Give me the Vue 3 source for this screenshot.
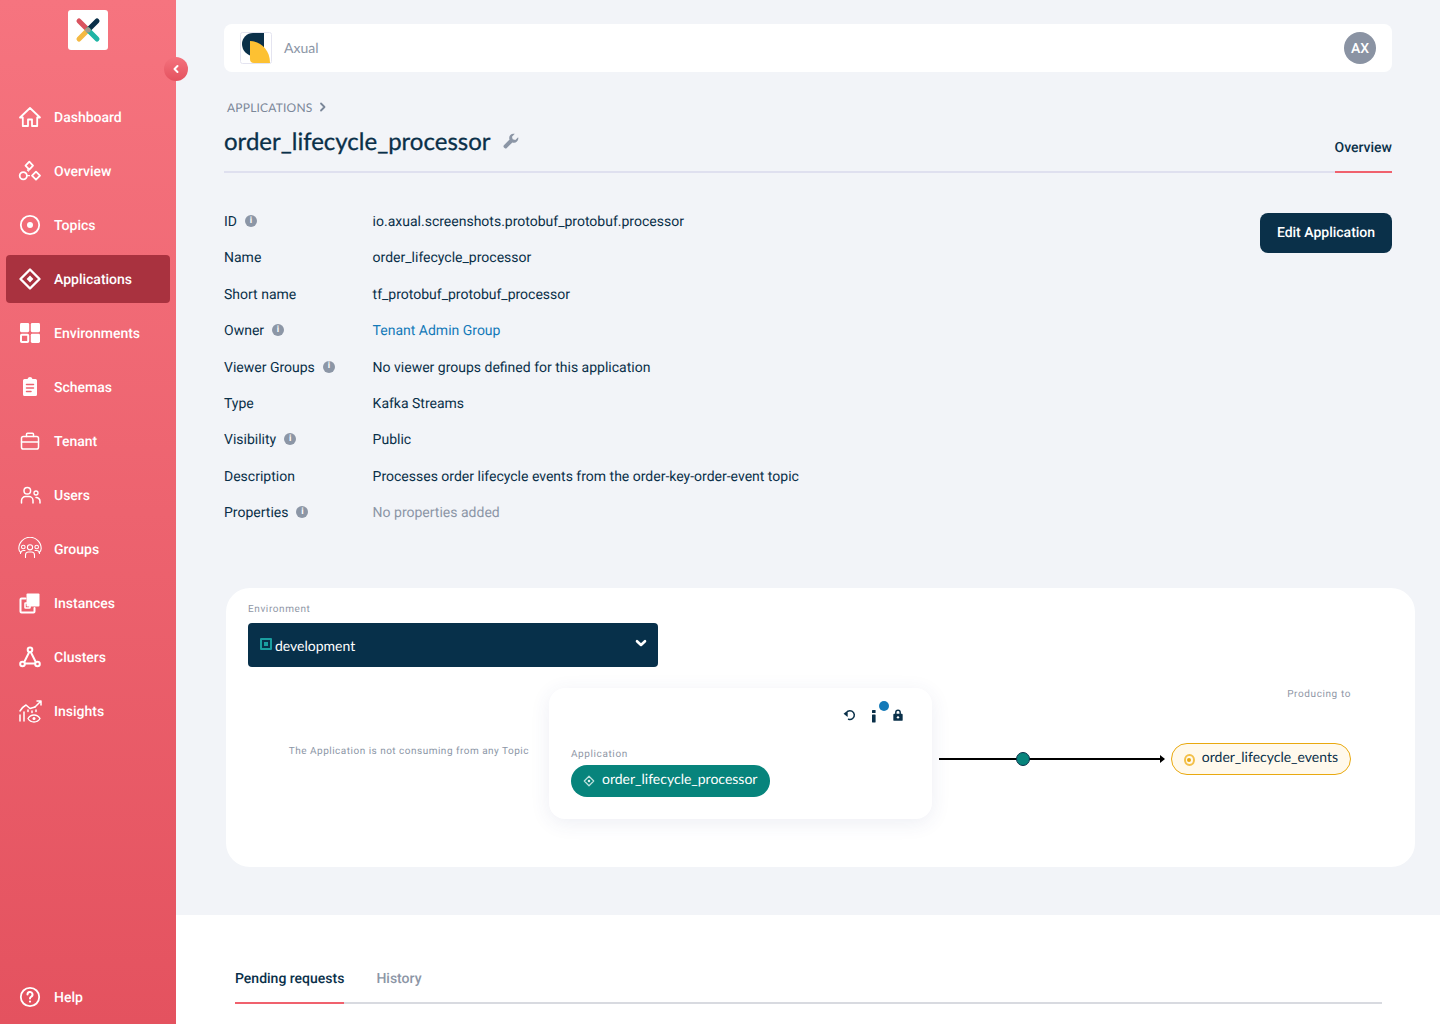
<script setup>
// Application detail page: sidebar, details list, environment diagram, request tabs
const navItems = [
  { label: 'Dashboard', icon: 'home' },
  { label: 'Overview', icon: 'overview' },
  { label: 'Topics', icon: 'topic' },
  { label: 'Applications', icon: 'app', active: true },
  { label: 'Environments', icon: 'env' },
  { label: 'Schemas', icon: 'schema' },
  { label: 'Tenant', icon: 'tenant' },
  { label: 'Users', icon: 'users' },
  { label: 'Groups', icon: 'groups' },
  { label: 'Instances', icon: 'instances' },
  { label: 'Clusters', icon: 'clusters' },
  { label: 'Insights', icon: 'insights' },
]

const details = [
  { label: 'ID', value: 'io.axual.screenshots.protobuf_protobuf.processor', info: true },
  { label: 'Name', value: 'order_lifecycle_processor' },
  { label: 'Short name', value: 'tf_protobuf_protobuf_processor' },
  { label: 'Owner', value: 'Tenant Admin Group', info: true, kind: 'link' },
  { label: 'Viewer Groups', value: 'No viewer groups defined for this application', info: true },
  { label: 'Type', value: 'Kafka Streams' },
  { label: 'Visibility', value: 'Public', info: true },
  { label: 'Description', value: 'Processes order lifecycle events from the order-key-order-event topic' },
  { label: 'Properties', value: 'No properties added', info: true, kind: 'muted' },
]
</script>

<template>
  <div class="page">
    <aside class="sidebar">
      <div class="logo">
        <svg width="28" height="28" viewBox="0 0 28 28" fill="none" stroke-width="5" stroke-linecap="round">
          <path d="M5 5 14 14" stroke="#d9535f" />
          <path d="M23 5 14 14" stroke="#0a3049" />
          <path d="M5 23 14 14" stroke="#f4b942" />
          <path d="M23 23 14 14" stroke="#1fb5a5" />
          <circle cx="14" cy="14" r="2.6" fill="#a39a8c" stroke="none" />
        </svg>
      </div>
      <button class="collapse" type="button" aria-label="Collapse">
        <svg width="8" height="10" viewBox="0 0 8 10" fill="none" stroke="#fff" stroke-width="2" stroke-linecap="round" stroke-linejoin="round"><path d="M5.5 2 2.5 5l3 3" /></svg>
      </button>

      <nav class="nav">
        <a v-for="item in navItems" :key="item.label" class="nav-item" :class="{ active: item.active }">
          <svg class="nav-icon" width="24" height="24" viewBox="0 0 24 24" fill="none" stroke="#fff" stroke-width="1.8" stroke-linejoin="round" stroke-linecap="round">
            <template v-if="item.icon === 'home'">
              <path d="M2 12.5 12 3l10 9.500h-2.800V21H14v-6.500h-4V21H4.800v-8.500z" />
            </template>
            <template v-else-if="item.icon === 'overview'">
              <path d="M11.300 2.700 15 6.700 11.300 10.700 7.500 6.700z" />
              <circle cx="5.300" cy="16.700" r="3.600" />
              <path d="M18 12.700l4 4-4 4-4-4z" />
              <path d="M9.500 16.700h2M9.500 11l1 1" stroke-width="1.200" />
            </template>
            <template v-else-if="item.icon === 'topic'">
              <circle cx="12" cy="12" r="9.200" />
              <circle cx="12" cy="12" r="3" fill="#fff" stroke="none" />
            </template>
            <template v-else-if="item.icon === 'app'">
              <path d="M12 2.500 21.500 12 12 21.500 2.500 12z" stroke-width="2.400" />
              <path d="M12 8.600 15.400 12 12 15.400 8.600 12z" fill="#fff" stroke="none" />
            </template>
            <template v-else-if="item.icon === 'env'">
              <rect x="2" y="2" width="9.200" height="9.200" rx="1.400" fill="#fff" stroke="none" />
              <rect x="12.800" y="2" width="9.200" height="9.200" rx="1.400" fill="#fff" stroke="none" />
              <rect x="3" y="13.800" width="7.200" height="7.200" rx="0.800" stroke-width="2" />
              <rect x="12.800" y="12.800" width="9.200" height="9.200" rx="1.400" fill="#fff" stroke="none" />
            </template>
            <template v-else-if="item.icon === 'schema'">
              <path d="M5 5.500A1.500 1.500 0 0 1 6.500 4H9.500a2.600 2.600 0 0 1 5 0h3A1.500 1.500 0 0 1 19 5.500v14a1.500 1.500 0 0 1-1.500 1.500h-11A1.500 1.500 0 0 1 5 19.500z" fill="#fff" stroke="none" />
              <path d="M8.500 9.500h7M8.500 13h7M8.500 16.500h4.500" stroke="#ee6470" stroke-width="1.500" />
            </template>
            <template v-else-if="item.icon === 'tenant'">
              <rect x="3.500" y="7.500" width="17" height="12.500" rx="1.800" stroke-width="1.500" />
              <path d="M8.500 7.500V5.300a1 1 0 0 1 1-1h5a1 1 0 0 1 1 1v2.200M3.500 13h17M10.500 13h3" stroke-width="1.500" />
            </template>
            <template v-else-if="item.icon === 'users'">
              <circle cx="9.300" cy="7.700" r="3.300" stroke-width="1.500" />
              <circle cx="18" cy="10" r="2" stroke-width="1.300" />
              <path d="M3.500 20v-2.500a4 4 0 0 1 4-4h3.500a4 4 0 0 1 4 4V20M18 14.500a3.800 3.800 0 0 1 4 4V20" stroke-width="1.500" />
            </template>
            <template v-else-if="item.icon === 'groups'">
              <g stroke-width="1.100">
                <path d="M.800 11.500a11.200 11.200 0 0 1 22.400 0c0 1.800-.8 3-2 4M.800 11.500c0 1.800.8 3 2 4" />
                <circle cx="12" cy="10.300" r="2.600" />
                <circle cx="5.300" cy="10" r="1.800" />
                <circle cx="18.700" cy="10" r="1.800" />
                <path d="M7.500 20.500v-2.500a3 3 0 0 1 3-3h3a3 3 0 0 1 3 3v2.500M2.500 16.500a3 3 0 0 1 3-3h1.500M21.500 16.500a3 3 0 0 0-3-3H17" />
              </g>
            </template>
            <template v-else-if="item.icon === 'instances'">
              <rect x="8.500" y="2.500" width="13" height="13" rx="1" fill="#fff" stroke="none" />
              <path d="M7.500 7.500H3.500a1 1 0 0 0-1 1v12a1 1 0 0 0 1 1h12a1 1 0 0 0 1-1v-3.500" stroke-width="2" />
              <rect x="7" y="12" width="5" height="5" rx="0.500" stroke-width="1.600" />
            </template>
            <template v-else-if="item.icon === 'clusters'">
              <path d="M12 5.500 5.500 18.500h13z" stroke-width="2" />
              <circle cx="12" cy="4.800" r="2.300" fill="#ee6470" stroke-width="2" />
              <circle cx="4.500" cy="19" r="2.300" fill="#ee6470" stroke-width="2" />
              <circle cx="19.500" cy="19" r="2.300" fill="#ee6470" stroke-width="2" />
            </template>
            <template v-else-if="item.icon === 'insights'">
              <path d="M2 22v-6M6 22v-9M23 2l-6 6M19 2h4v4" stroke-width="1.500" />
              <path d="M2 12c2-3 4-5 6-6l4 3.500 5-1.500" stroke-width="1.500" />
              <path d="M10 19.500c1.500-2.500 3.500-3.500 6-3.500s4.500 1 6 3.500c-1.500 2.500-3.500 3.500-6 3.500s-4.500-1-6-3.500z" stroke-width="1.400" />
              <circle cx="16" cy="19.500" r="1.500" fill="#fff" stroke="none" />
              <path d="M10 11v3M14 12v2M18 11v3" stroke-width="1.500" stroke-dasharray="1.500 1.500" />
            </template>
          </svg>
          <span>{{ item.label }}</span>
        </a>
      </nav>

      <a class="nav-item help">
        <svg class="nav-icon" width="24" height="24" viewBox="0 0 24 24" fill="none" stroke="#fff" stroke-width="1.800" stroke-linecap="round">
          <circle cx="12" cy="12" r="9.200" />
          <path d="M9.500 9.500A2.500 2.500 0 1 1 13 11.800c-.7.300-1 .8-1 1.600" stroke-width="2" />
          <circle cx="12" cy="16.600" r="1.100" fill="#fff" stroke="none" />
        </svg>
        <span>Help</span>
      </a>
    </aside>

    <main class="main">
      <div class="content">
        <header class="topbar">
          <div class="org">
            <div class="org-logo">
              <svg width="32" height="32" viewBox="0 0 32 32">
                <rect x="0.500" y="0.500" width="31" height="31" rx="2" fill="#fff" stroke="#e4e4f0" />
                <path d="M24 1H13A11 11 0 0 0 2 12 12 12 0 0 0 14 24h10z" fill="#0a3049" />
                <path d="M10 9c10 0 20 8 20 22H14a4 4 0 0 1-4-4z" fill="#fdc132" />
              </svg>
            </div>
            <span class="org-name">Axual</span>
          </div>
          <div class="avatar"><span>AX</span></div>
        </header>

        <div class="crumb">
          <span>APPLICATIONS</span>
          <svg width="8" height="10" viewBox="0 0 8 10" fill="none" stroke="#7b8799" stroke-width="1.800" stroke-linecap="round" stroke-linejoin="round"><path d="M2 1.500 5.500 5 2 8.500" /></svg>
        </div>

        <div class="title-row">
          <div class="title-wrap">
            <h1>order_lifecycle_processor</h1>
            <svg width="16" height="16" viewBox="0 0 24 24" fill="#8c96a6"><path d="M22.700 6.300a6.500 6.500 0 0 1-8.600 7.900L5.700 22.600a2.400 2.400 0 0 1-3.300 0l-1-1a2.400 2.400 0 0 1 0-3.300l8.400-8.400A6.500 6.500 0 0 1 17.700 1.300L13.500 5.500l1 4 4 1z" /></svg>
          </div>
          <div class="overview-tab">Overview</div>
        </div>

        <section class="details">
          <dl class="detail-list">
            <div v-for="row in details" :key="row.label" class="detail-row">
              <dt>
                {{ row.label }}
                <span v-if="row.info" class="info">i</span>
              </dt>
              <dd :class="row.kind">{{ row.value }}</dd>
            </div>
          </dl>
          <button class="edit" type="button">Edit Application</button>
        </section>

        <section class="diagram">
          <div class="small-label">Environment</div>
          <div class="env-select">
            <span class="env-mark"><i></i></span>
            <span class="env-name">development</span>
            <svg class="env-chevron" width="12" height="9" viewBox="0 0 12 9" fill="none" stroke="#fff" stroke-width="2.600" stroke-linecap="round" stroke-linejoin="round"><path d="M2 2.200 6 6l4-3.800" /></svg>
          </div>

          <div class="flow">
            <div class="flow-empty">The Application is not consuming from any Topic</div>
            <div class="node">
              <div class="node-actions">
                <svg class="undo" width="14" height="14" viewBox="0 0 24 24" fill="none" stroke="#0a3049" stroke-width="2.600" stroke-linecap="round" stroke-linejoin="round"><path d="M1 11.500 8 6v11z" fill="#0a3049" stroke="none" /><path d="M8 7.500A7.500 7.500 0 1 1 9.500 21" /></svg>
                <span class="node-info">
                  <svg width="14" height="14" viewBox="0 0 14 14" fill="#0a3049"><rect x="5" y="1" width="3.600" height="3" rx="0.600" /><rect x="5" y="5.500" width="3.600" height="8" rx="0.400" /></svg>
                  <i class="node-dot"></i>
                </span>
                <svg width="14" height="14" viewBox="0 0 24 24" fill="#0a3049"><path d="M7 10V7.500a5 5 0 0 1 10 0V10h1.500a1.500 1.500 0 0 1 1.500 1.500v9a1.500 1.500 0 0 1-1.500 1.500h-13A1.500 1.500 0 0 1 4 20.500v-9A1.500 1.500 0 0 1 5.500 10zm2.500 0h5V7.500a2.500 2.500 0 0 0-5 0z" /><circle cx="12" cy="16" r="2" fill="#fff" /></svg>
              </div>
              <div class="small-label">Application</div>
              <div class="app-chip">
                <svg width="12" height="12" viewBox="0 0 24 24" fill="none" stroke="#bfe3df" stroke-width="2.400" stroke-linejoin="round"><path d="M12 2.500 21.500 12 12 21.500 2.500 12z" /><path d="M12 9 15 12 12 15 9 12z" fill="#fff" stroke="none" /></svg>
                <span>order_lifecycle_processor</span>
              </div>
            </div>

            <div class="connector">
              <span class="conn-dot"></span>
              <span class="conn-head"></span>
            </div>

            <div class="target">
              <div class="small-label">Producing to</div>
              <div class="topic-chip">
                <span class="topic-mark"><i></i></span>
                <span class="topic-name">order_lifecycle_events</span>
              </div>
            </div>
          </div>
        </section>
      </div>

      <section class="requests">
        <div class="tabs">
          <div class="tab current">Pending requests</div>
          <div class="tab">History</div>
        </div>
      </section>
    </main>
  </div>
</template>

<style scoped>
.page {
  display: flex;
  height: 1024px;
  overflow: hidden;
  background: #f2f4f8;
  font-family: Roboto, "Liberation Sans", sans-serif;
  color: #0a3049;
  text-rendering: geometricPrecision;
}

.sidebar {
  position: relative;
  flex: 0 0 176px;
  display: flex;
  flex-direction: column;
  background: linear-gradient(180deg, #f6747f 0%, #e4525f 100%);
}

.logo {
  width: 40px;
  height: 40px;
  margin: 10px auto 0;
  display: flex;
  align-items: center;
  justify-content: center;
  background: #fff;
  border-radius: 3px;
}

.collapse {
  position: absolute;
  top: 57px;
  right: -12px;
  z-index: 2;
  width: 24px;
  height: 24px;
  padding: 0;
  display: flex;
  align-items: center;
  justify-content: center;
  border: none;
  border-radius: 50%;
  background: linear-gradient(180deg, #f4727d, #e4525f);
}

.nav {
  flex: 1;
  display: flex;
  flex-direction: column;
  gap: 6px;
  margin-top: 43px;
}

.nav-item {
  display: flex;
  align-items: center;
  gap: 12px;
  height: 48px;
  margin: 0 6px;
  padding-left: 12px;
  border-radius: 4px;
  color: #fff;
  font-size: 14px;
  font-weight: 500;
}
.nav-item span {
  margin-top: 2px;
}
.nav-item.active {
  background: #a9323f;
}
.nav-item.help {
  margin-bottom: 3px;
}
.nav-icon {
  flex: none;
}

.main {
  flex: 1;
  min-width: 0;
  display: flex;
  flex-direction: column;
}

.content {
  flex: 1;
  padding: 24px 48px 0;
}

.topbar {
  display: flex;
  align-items: center;
  justify-content: space-between;
  height: 48px;
  padding: 0 16px;
  background: #fff;
  border-radius: 8px;
}
.org {
  display: flex;
  align-items: center;
  gap: 12px;
}
.org-logo {
  width: 32px;
  height: 32px;
}
.org-name {
  margin-top: -2px;
  font-family: Lato, sans-serif;
  font-size: 14px;
  color: #8c96a6;
}
.avatar {
  width: 32px;
  height: 32px;
  display: flex;
  align-items: center;
  justify-content: center;
  border-radius: 50%;
  background: #8a93a3;
  color: #fff;
  font-size: 14px;
  font-weight: 500;
}
.avatar span {
  margin-top: 2px;
}

.crumb {
  display: flex;
  align-items: center;
  gap: 7px;
  margin: 27px 0 0 3px;
  height: 16px;
  font-family: Lato, sans-serif;
  font-size: 12px;
  letter-spacing: 0.2px;
  color: #7b8799;
}

.title-row {
  display: flex;
  justify-content: space-between;
  height: 53px;
  margin-top: 3px;
  border-bottom: 2px solid #dfe0ef;
  box-sizing: content-box;
}
.title-wrap {
  display: flex;
  align-items: flex-start;
  gap: 12px;
  padding-top: 7px;
}
.title-wrap svg {
  margin-top: 8px;
}
h1 {
  margin: 0;
  font-family: Lato, sans-serif;
  font-size: 24px;
  font-weight: 400;
  line-height: 34px;
  color: #0a3049;
  -webkit-text-stroke: 0.3px #0a3049;
}
.overview-tab {
  align-self: flex-end;
  height: 31px;
  padding-top: 1px;
  margin-bottom: -2px;
  border-bottom: 2px solid #f0616d;
  font-size: 14px;
  font-weight: 500;
  line-height: 16px;
}

.details {
  display: flex;
  justify-content: space-between;
  align-items: flex-start;
  margin-top: 39px;
}
.detail-list {
  margin: 1px 0 0;
}
.detail-row {
  display: flex;
  height: 36.375px;
  font-size: 14px;
  line-height: 18px;
}
.detail-row dt {
  width: 148.6px;
  display: flex;
  align-items: flex-start;
  gap: 8px;
}
.detail-row dd {
  margin: 0;
}
dd.link {
  color: #147ab8;
}
dd.muted {
  color: #8c96a6;
}
.info {
  width: 12px;
  height: 12px;
  margin-top: 2px;
  display: flex;
  align-items: center;
  justify-content: center;
  border-radius: 50%;
  background: #8c96a6;
  color: #fff;
  font-size: 9px;
  font-weight: 700;
  line-height: 1;
}
.edit {
  width: 132px;
  height: 40px;
  margin-top: 1px;
  border: none;
  border-radius: 8px;
  background: #0a3049;
  color: #fff;
  font-family: Roboto, sans-serif;
  font-size: 14px;
  font-weight: 500;
  text-rendering: geometricPrecision;
}

.diagram {
  box-sizing: border-box;
  width: 1189px;
  height: 279px;
  margin: 48px 0 0 2px;
  padding: 15px 22px 0;
  background: #fff;
  border-radius: 24px;
}
.small-label {
  height: 11px;
  padding-top: 1px;
  font-size: 10px;
  line-height: 12px;
  letter-spacing: 0.6px;
  color: #9097a6;
}
.env-select {
  display: flex;
  align-items: center;
  gap: 3px;
  width: 410px;
  height: 44px;
  margin-top: 8px;
  padding: 0 12px;
  box-sizing: border-box;
  background: #07304a;
  border-radius: 4px;
  color: #fff;
  font-family: Lato, sans-serif;
  font-size: 14px;
}
.env-mark {
  width: 12px;
  height: 12px;
  margin-top: -2px;
  display: flex;
  align-items: center;
  justify-content: center;
  box-sizing: border-box;
  border: 2px solid #1a9ea0;
  border-radius: 1px;
}
.env-mark i {
  width: 4px;
  height: 4px;
  background: #1a9ea0;
}
.env-name {
  flex: 1;
  margin-top: 1px;
}
.env-chevron {
  margin-top: -4px;
  margin-right: -1px;
}

.flow {
  display: flex;
  align-items: flex-start;
  margin-top: 21px;
}
.flow-empty {
  width: 301px;
  margin-top: 58px;
  padding-right: 20px;
  box-sizing: border-box;
  text-align: right;
  font-size: 10px;
  line-height: 12px;
  letter-spacing: 0.49px;
  color: #8c96a6;
}
.node {
  box-sizing: border-box;
  width: 383px;
  height: 131px;
  padding: 16px 22px 0;
  background: #fff;
  border-radius: 16px;
  box-shadow: 0 4px 20px rgba(60, 70, 130, 0.09);
}
.node-actions {
  display: flex;
  justify-content: flex-end;
  gap: 10px;
  height: 22px;
  margin-right: 5px;
  margin-bottom: 18px;
  padding-top: 4px;
}
.undo {
  margin-top: -1px;
}
.node-info {
  position: relative;
  width: 14px;
  height: 14px;
}
.node-dot {
  position: absolute;
  top: -7px;
  right: -8px;
  width: 10px;
  height: 10px;
  border-radius: 50%;
  background: #147ab8;
}
.app-chip {
  display: inline-flex;
  align-items: center;
  gap: 7px;
  height: 32px;
  margin-top: 5px;
  padding: 0 13px 0 12px;
  border-radius: 16px;
  background: #07847c;
  color: #fff;
  font-family: Lato, sans-serif;
  font-size: 14px;
}
.app-chip span {
  margin-top: -5px;
}

.connector {
  position: relative;
  width: 225px;
  height: 2px;
  margin: 70px 1px 0 7px;
  background: #000;
}
.conn-dot {
  position: absolute;
  left: 77px;
  top: -6px;
  width: 14px;
  height: 14px;
  box-sizing: border-box;
  border: 1.500px solid #0a3049;
  border-radius: 50%;
  background: #07847c;
}
.conn-head {
  position: absolute;
  right: -1px;
  top: -3px;
  width: 0;
  height: 0;
  border-left: 5px solid #000;
  border-top: 4px solid transparent;
  border-bottom: 4px solid transparent;
}

.target {
  width: 180px;
  margin-left: 6px;
  text-align: right;
}
.topic-chip {
  display: flex;
  align-items: center;
  gap: 7px;
  height: 32px;
  margin-top: 43px;
  padding: 0 12px;
  box-sizing: border-box;
  border: 1px solid #e9a90f;
  border-radius: 16px;
  background: #fff9ec;
  font-family: Lato, sans-serif;
  font-size: 14px;
  color: #0a3049;
}
.topic-name {
  margin-top: -5px;
}
.topic-mark {
  width: 12px;
  height: 12px;
  margin-top: 1px;
  display: flex;
  align-items: center;
  justify-content: center;
  box-sizing: border-box;
  border: 2px solid #f3c04a;
  border-radius: 50%;
}
.topic-mark i {
  width: 4px;
  height: 4px;
  border-radius: 50%;
  background: #e9a90f;
}

.requests {
  flex: none;
  height: 109px;
  padding: 0 58px 0 59px;
  box-sizing: border-box;
  background: #fff;
}
.tabs {
  display: flex;
  gap: 32px;
  height: 89px;
  box-sizing: border-box;
  border-bottom: 2px solid #d8dae0;
}
.tab {
  height: 89px;
  box-sizing: border-box;
  padding-top: 56px;
  font-size: 14px;
  font-weight: 500;
  line-height: 16px;
  color: #8c96a6;
}
.tab.current {
  color: #0a3049;
  border-bottom: 2px solid #f0616d;
}
</style>

<style>
html, body {
  margin: 0;
  overflow: hidden;
}
</style>
